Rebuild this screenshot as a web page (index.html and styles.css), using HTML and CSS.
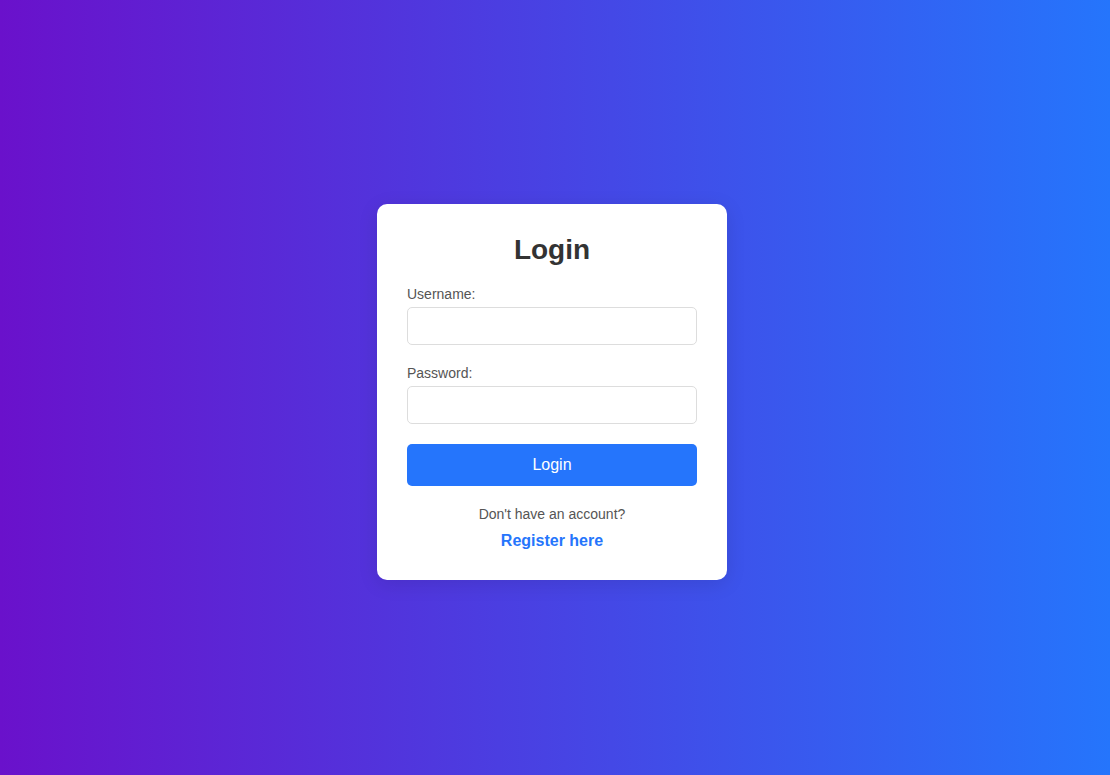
FILE: index.html
```html
<!DOCTYPE html>
<html lang="en">
<head>
<meta charset="utf-8">
<title>Login</title>
<link rel="stylesheet" href="styles.css">
</head>
<body>
<main class="page">
  <form class="card">
    <h2 class="title">Login</h2>
    <label class="label" for="username">Username:</label>
    <input class="input" id="username" type="text">
    <label class="label" for="password">Password:</label>
    <input class="input" id="password" type="password">
    <button class="btn" type="button">Login</button>
    <p class="note">Don't have an account?</p>
    <a class="link" href="#">Register here</a>
  </form>
</main>
</body>
</html>
```
FILE: styles.css
```css
* { box-sizing: border-box; }
html, body { margin: 0; height: 100%; }
body {
  font-family: "Liberation Sans", Arial, sans-serif;
  background: linear-gradient(to right, #6a11cb, #2575fc);
}
.page {
  height: 100%;
  display: flex;
  align-items: center;
  justify-content: center;
  padding: 9px 6px 0 0;
}
.card {
  width: 350px;
  background: #fff;
  border-radius: 10px;
  padding: 30px;
  box-shadow: 0 4px 20px rgba(0, 0, 0, 0.1);
  display: flex;
  flex-direction: column;
}
.title {
  margin: 0 0 20px;
  text-align: center;
  font-size: 28px;
  line-height: 32px;
  color: #333;
}
.label {
  font-size: 14px;
  line-height: 16px;
  color: #555;
  margin-bottom: 5px;
}
.input {
  height: 38px;
  width: 100%;
  border: 1px solid #ddd;
  border-radius: 5px;
  padding: 10px;
  font-size: 14px;
  margin: 0 0 20px;
  background: #fff;
}
.btn {
  height: 42px;
  width: 100%;
  border: none;
  border-radius: 5px;
  background: #2575fc;
  color: #fff;
  font-family: inherit;
  font-size: 16px;
  cursor: pointer;
}
.note {
  margin: 20px 0 0;
  text-align: center;
  font-size: 14px;
  line-height: 16px;
  color: #555;
}
.link {
  margin-top: 10px;
  text-align: center;
  font-size: 16px;
  line-height: 18px;
  font-weight: bold;
  color: #2575fc;
  text-decoration: none;
}
```
